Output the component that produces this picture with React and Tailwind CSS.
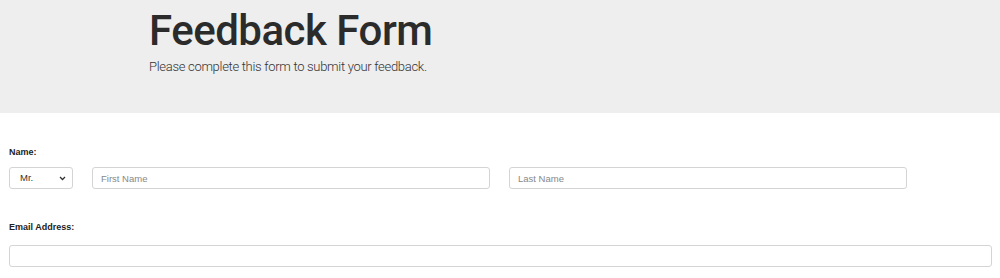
export default function App() {
  return (
    <div className="w-[1000px] h-[278px] overflow-hidden bg-white font-['Liberation_Sans',Arial,sans-serif] text-[#333]">
      <header className="h-[113px] bg-[#eeeeee] pl-[149px] pt-[7px]">
        <h1 className="font-['Roboto',sans-serif] text-[42px] leading-[48px] font-medium tracking-[-0.5px] text-[#2b2b2b]">Feedback Form</h1>
        <p className="mt-[3px] font-['Roboto',sans-serif] font-light text-[13px] leading-[18px] tracking-[-0.3px] text-[#333]">
          Please complete this form to submit your feedback.
        </p>
      </header>

      <form className="px-[9px] pt-[33px]">
        <label className="block text-[9px] leading-[12px] font-bold text-[#222]">Name:</label>
        <div className="mt-[9px] flex items-center gap-[19px]">
          <div className="relative w-[64px] h-[22px] rounded-[3px] border border-[#d4d4d4] bg-white flex items-center pl-[10px] text-[9.5px] text-[#333]">
            Mr.
            <svg className="absolute right-[6px] top-[8px]" width="7" height="5" viewBox="0 0 7 5">
              <path d="M1 1l2.5 2.5L6 1" fill="none" stroke="#333" strokeWidth="1.3" />
            </svg>
          </div>
          <input
            placeholder="First Name"
            className="w-[398px] h-[22px] rounded-[3px] border border-[#d4d4d4] px-[8px] text-[9.5px] placeholder:text-[#888] outline-none"
          />
          <input
            placeholder="Last Name"
            className="w-[398px] h-[22px] rounded-[3px] border border-[#d4d4d4] px-[8px] text-[9.5px] placeholder:text-[#888] outline-none"
          />
        </div>

        <label className="mt-[32px] block text-[9px] leading-[12px] font-bold text-[#222]">Email Address:</label>
        <input className="mt-[12px] block w-[983px] h-[22px] rounded-[3px] border border-[#d4d4d4] px-[8px] text-[9.5px] outline-none" />
      </form>
    </div>
  );
}
